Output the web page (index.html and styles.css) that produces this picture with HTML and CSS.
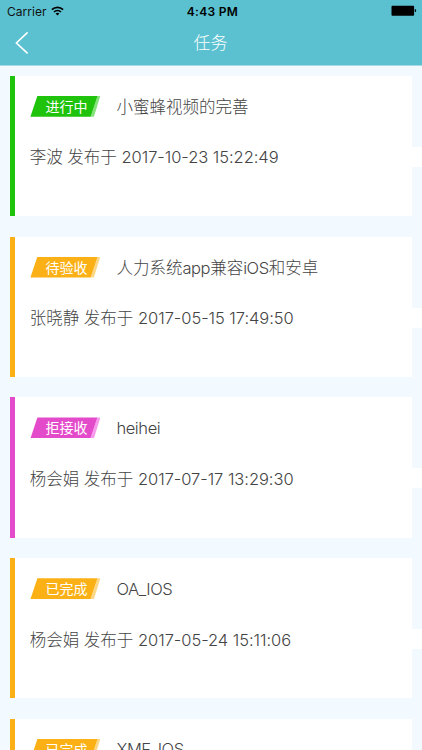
FILE: index.html
```html
<!DOCTYPE html>
<html lang="zh-CN">

<head>
    <meta charset="UTF-8">
    <meta name="viewport" content="width=device-width, initial-scale=1.0">
    <title>任务</title>
    <link rel="stylesheet" href="styles.css">
</head>

<body>

    <header class="header">
        <div class="status-bar">
            <div class="carrier">
                <span>Carrier</span>
                <svg class="wifi" viewBox="0 0 13 10" width="13" height="10">
                    <path d="M0.9 3.7 A8 8 0 0 1 12.1 3.7" fill="none" stroke="#000" stroke-width="1.7"/>
                    <path d="M3 6 A5 5 0 0 1 10 6" fill="none" stroke="#000" stroke-width="1.6"/>
                    <path d="M6.5 9.6 L4.6 7.6 A2.7 2.7 0 0 1 8.4 7.6 Z" fill="#000"/>
                </svg>
            </div>
            <div class="time">4:43 PM</div>
            <div class="battery">
                <svg viewBox="0 0 26 12" width="26" height="12">
                    <rect x="0.5" y="0.7" width="22.6" height="10" rx="1" fill="#000"/>
                    <path d="M23.8 4.1 Q25.2 4.4 25.2 5.7 Q25.2 7 23.8 7.3 Z" fill="#000"/>
                </svg>
            </div>
        </div>
        <div class="nav-bar">
            <a class="back" href="#">
                <svg viewBox="0 0 14 24" width="14" height="24">
                    <path d="M12.6 1.4 L1.4 12 L12.6 22.4" fill="none" stroke="#fff" stroke-width="1.6"/>
                </svg>
            </a>
            <h1 class="title">任务</h1>
        </div>
    </header>

    <ul class="task-list">
        <li class="task doing">
            <div class="task-head">
                <span class="tag">进行中</span>
                <span class="name">小蜜蜂视频的完善</span>
            </div>
            <p class="info">李波 发布于 <span class="date">2017-10-23 15:22:49</span></p>
        </li>
        <li class="task waiting">
            <div class="task-head">
                <span class="tag">待验收</span>
                <span class="name">人力系统<span class="en">app</span>兼容<span class="en">iOS</span>和安卓</span>
            </div>
            <p class="info">张晓静 发布于 <span class="date">2017-05-15 17:49:50</span></p>
        </li>
        <li class="task rejected">
            <div class="task-head">
                <span class="tag">拒接收</span>
                <span class="name en">heihei</span>
            </div>
            <p class="info">杨会娟 发布于 <span class="date">2017-07-17 13:29:30</span></p>
        </li>
        <li class="task done">
            <div class="task-head">
                <span class="tag">已完成</span>
                <span class="name en">OA_IOS</span>
            </div>
            <p class="info">杨会娟 发布于 <span class="date">2017-05-24 15:11:06</span></p>
        </li>
        <li class="task done">
            <div class="task-head">
                <span class="tag">已完成</span>
                <span class="name en">XMF_IOS</span>
            </div>
        </li>
    </ul>

</body>

</html>
```
FILE: styles.css
```css
* {
    box-sizing: border-box;
}

body {
    margin: 0;
    height: 750px;
    overflow: hidden;
    background-color: #f2faff;
    font-family: Inter, "Noto Sans CJK SC", sans-serif;
    color: #444;
}

.header {
    height: 66px;
    background-color: #5bc1d0;
    border-bottom: 1px solid #a5dde6;
}

.status-bar {
    display: grid;
    grid-template-columns: 1fr auto 1fr;
    align-items: center;
    height: 22px;
    padding: 0 5px 0 7px;
    font-size: 12px;
    color: #111;
}

.carrier {
    display: flex;
    align-items: center;
    gap: 4px;
    letter-spacing: 0.05px;
}

.time {
    margin-left: 1px;
    font-weight: 600;
    letter-spacing: 0.3px;
    color: #000;
}

.battery {
    display: flex;
    justify-content: flex-end;
}

.nav-bar {
    display: grid;
    grid-template-columns: 1fr auto 1fr;
    align-items: center;
    height: 41px;
    padding: 0 16px 0 15px;
}

.back {
    display: flex;
}

.title {
    margin: 0;
    padding-bottom: 2px;
    font-size: 17px;
    font-weight: 300;
    color: #fff;
}

.task-list {
    display: flex;
    flex-direction: column;
    gap: 20.5px;
    margin: 0;
    padding: 9.8px 10px 0 10.4px;
    list-style: none;
}

.task {
    position: relative;
    flex: none;
    height: 140.3px;
    padding: 20px 0 0 15px;
    border-left: 5px solid var(--color);
    background-color: #fff;
}

/* white strip between the card and the screen edge */
.task::after {
    content: "";
    position: absolute;
    top: 71px;
    right: -10px;
    width: 10px;
    height: 20px;
    background-color: #fff;
}

.doing {
    --color: #1fc30b;
    --color-light: #86e27b;
}

.waiting,
.done {
    --color: #fbb116;
    --color-light: #fdd788;
}

.rejected {
    --color: #e44bca;
    --color-light: #f79bec;
}

.task-head {
    display: flex;
    align-items: center;
    height: 21px;
}

.tag {
    width: 70px;
    height: 21px;
    margin-right: 16px;
    padding-left: 2px;
    line-height: 21px;
    text-align: center;
    font-size: 14px;
    font-weight: 400;
    color: #fff;
    background: linear-gradient(108.4deg, var(--color) 87%, var(--color-light) 88%);
    clip-path: polygon(7px 0, 100% 0, 63.5px 100%, 0 100%);
}

.name,
.info {
    font-size: 16.5px;
    font-weight: 300;
    white-space: nowrap;
}

.en {
    letter-spacing: -0.4px;
}

.info {
    margin: 28.6px 0 0 -0.7px;
    line-height: 24px;
}

.date {
    letter-spacing: -0.05px;
}
```
